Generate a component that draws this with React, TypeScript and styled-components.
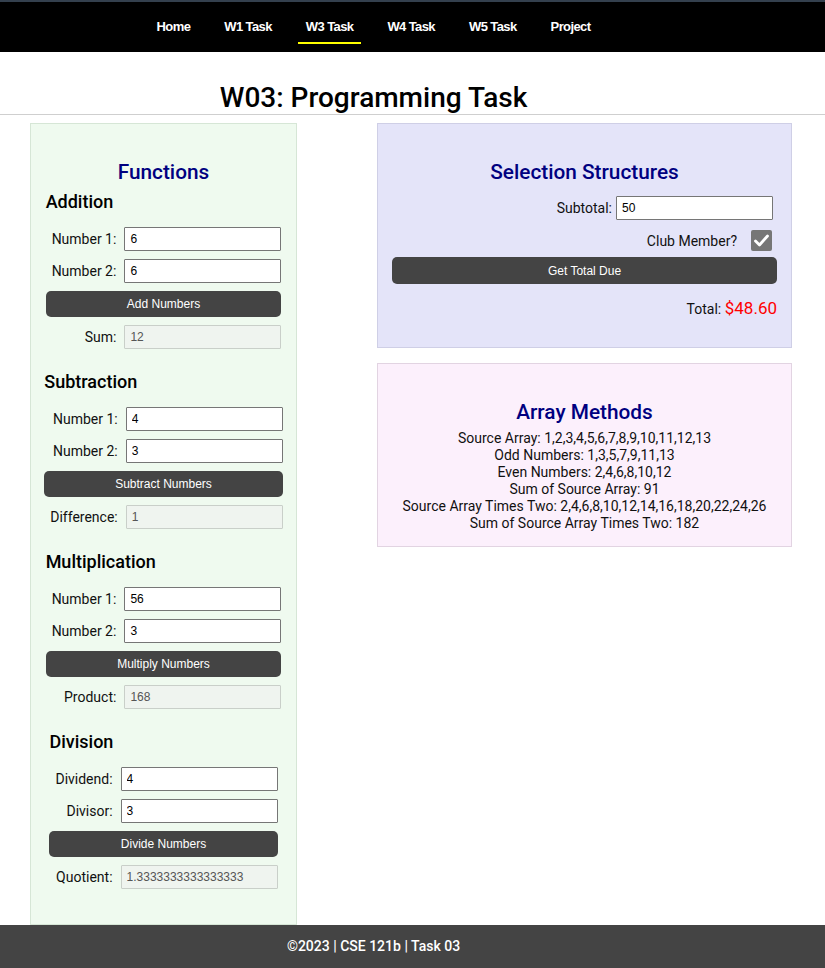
import React from "react";
import styled, { createGlobalStyle } from "styled-components";

const GlobalStyle = createGlobalStyle`
  html, body { margin: 0; padding: 0; background: #fff; }
  body { font-family: Roboto, "Noto Sans", Arial, sans-serif; color: #111; }
  * { box-sizing: border-box; }
`;

const Nav = styled.nav`
  background: #000;
  border-top: 2px solid #34404e;
  height: 52px;
`;

const NavInner = styled.ul`
  width: 747px;
  margin: 0;
  padding: 0;
  list-style: none;
  display: flex;
  justify-content: center;
  gap: 18px;
`;

const NavLink = styled.a<{ $active?: boolean }>`
  display: block;
  padding: 17px 8px 7px;
  line-height: 16px;
  font-family: "Liberation Sans", Arial, sans-serif;
  font-weight: 700;
  font-size: 13px;
  letter-spacing: -0.6px;
  color: #fff;
  text-decoration: none;
  border-bottom: 2px solid ${(p) => (p.$active ? "#ffff00" : "transparent")};
`;

const Header = styled.header`
  border-bottom: 1px solid #cfcfcf;
`;

const Title = styled.h1`
  width: 747px;
  margin: 0;
  padding: 29px 0 0;
  text-align: center;
  font-size: 28px;
  line-height: 33px;
  font-weight: 500;
  color: #000;
`;

const Main = styled.main`
  display: grid;
  grid-template-columns: 267px 415px;
  column-gap: 80px;
  align-items: start;
  padding: 8px 0 0 30px;
`;

const Panel = styled.section<{ $bg: string; $border: string }>`
  background: ${(p) => p.$bg};
  border: 1px solid ${(p) => p.$border};
`;

const FunctionsPanel = styled(Panel)`
  padding: 35px 0 35px;
  display: flex;
  flex-direction: column;
  gap: 22px;
`;

const RightColumn = styled.div`
  display: flex;
  flex-direction: column;
  gap: 15px;
`;

const PanelTitle = styled.h2`
  margin: 0;
  font-size: 20.8px;
  line-height: 26px;
  font-weight: 500;
  color: #000080;
  text-align: center;
`;

const FunctionsTitle = styled(PanelTitle)`
  margin-bottom: -16px;
`;

const Group = styled.div`
  display: grid;
  grid-template-columns: auto 157px;
  column-gap: 8px;
  row-gap: 8px;
  width: fit-content;
  margin: 0 auto;
  align-items: center;
`;

const GroupTitle = styled.h3`
  grid-column: 1 / -1;
  margin: 0 0 7px;
  font-size: 18px;
  line-height: 21px;
  font-weight: 500;
  color: #000;
`;

const Label = styled.label`
  padding-left: 6px;
  text-align: right;
  font-size: 14px;
  color: #111;
`;

const TextInput = styled.input`
  width: 157px;
  height: 24px;
  margin: 0;
  padding: 1px 5px;
  border: 1px solid #767676;
  border-radius: 1px;
  background: #fff;
  font-family: "Liberation Sans", Arial, sans-serif;
  font-size: 12px;
  color: #000;
`;

const Output = styled(TextInput)`
  background: #eff4ef;
  border-color: #c9cfc9;
  color: #555;
`;

const Button = styled.button`
  grid-column: 1 / -1;
  height: 26px;
  margin: 0;
  border: none;
  border-radius: 5px;
  background: #444;
  color: #fff;
  font-family: "Liberation Sans", Arial, sans-serif;
  font-size: 12px;
  cursor: pointer;
`;

const SelectionPanel = styled(Panel)`
  padding: 35px 14px 28px;
`;

const RightRow = styled.div<{ $gap: number; $mt: number }>`
  display: flex;
  justify-content: flex-end;
  align-items: center;
  gap: ${(p) => p.$gap}px;
  margin-top: ${(p) => p.$mt}px;
  padding-right: 4px;
  font-size: 14px;
`;

const Check = styled.span`
  width: 21px;
  height: 21px;
  margin-right: 1px;
  border-radius: 2px;
  background: #767676;
  display: flex;
  align-items: center;
  justify-content: center;
`;

const WideButton = styled(Button)`
  display: block;
  width: 100%;
  height: 27px;
  margin-top: 6px;
`;

const TotalRow = styled.div`
  margin-top: 14px;
  text-align: right;
  font-size: 14px;
  line-height: 20px;
`;

const TotalValue = styled.span`
  color: #ff0000;
  font-size: 17px;
`;

const ArrayPanel = styled(Panel)`
  padding: 35px 14px 14px;
`;

const ArrayLines = styled.div`
  margin-top: 5px;
  text-align: center;
  font-size: 14px;
  line-height: 17px;
`;

const Footer = styled.footer`
  background: #444;
  height: 43px;
`;

const FooterText = styled.p`
  width: 747px;
  margin: 0;
  text-align: center;
  line-height: 43px;
  font-size: 14px;
  font-weight: 500;
  color: #fff;
`;

type Field = { label: string; value: string };
type Op = { title: string; inputs: Field[]; button: string; result: Field };

const ops: Op[] = [
  { title: "Addition", inputs: [{ label: "Number 1:", value: "6" }, { label: "Number 2:", value: "6" }], button: "Add Numbers", result: { label: "Sum:", value: "12" } },
  { title: "Subtraction", inputs: [{ label: "Number 1:", value: "4" }, { label: "Number 2:", value: "3" }], button: "Subtract Numbers", result: { label: "Difference:", value: "1" } },
  { title: "Multiplication", inputs: [{ label: "Number 1:", value: "56" }, { label: "Number 2:", value: "3" }], button: "Multiply Numbers", result: { label: "Product:", value: "168" } },
  { title: "Division", inputs: [{ label: "Dividend:", value: "4" }, { label: "Divisor:", value: "3" }], button: "Divide Numbers", result: { label: "Quotient:", value: "1.3333333333333333" } },
];

const links = ["Home", "W1 Task", "W3 Task", "W4 Task", "W5 Task", "Project"];

const arrayLines = [
  "Source Array: 1,2,3,4,5,6,7,8,9,10,11,12,13",
  "Odd Numbers: 1,3,5,7,9,11,13",
  "Even Numbers: 2,4,6,8,10,12",
  "Sum of Source Array: 91",
  "Source Array Times Two: 2,4,6,8,10,12,14,16,18,20,22,24,26",
  "Sum of Source Array Times Two: 182",
];

export default function App() {
  return (
    <>
      <GlobalStyle />
      <Nav>
        <NavInner>
          {links.map((l) => (
            <li key={l}>
              <NavLink href="#" $active={l === "W3 Task"}>{l}</NavLink>
            </li>
          ))}
        </NavInner>
      </Nav>
      <Header>
        <Title>W03: Programming Task</Title>
      </Header>
      <Main>
        <FunctionsPanel $bg="#effaef" $border="#d6e6d6">
          <FunctionsTitle>Functions</FunctionsTitle>
          {ops.map((op) => (
            <Group key={op.title}>
              <GroupTitle>{op.title}</GroupTitle>
              {op.inputs.map((f) => (
                <React.Fragment key={f.label}>
                  <Label>{f.label}</Label>
                  <TextInput defaultValue={f.value} />
                </React.Fragment>
              ))}
              <Button>{op.button}</Button>
              <Label>{op.result.label}</Label>
              <Output readOnly value={op.result.value} />
            </Group>
          ))}
        </FunctionsPanel>
        <RightColumn>
          <SelectionPanel $bg="#e4e4f9" $border="#cfcfe6">
            <PanelTitle>Selection Structures</PanelTitle>
            <RightRow $gap={4} $mt={11}>
              <span>Subtotal:</span>
              <TextInput defaultValue="50" />
            </RightRow>
            <RightRow $gap={14} $mt={10}>
              <span>Club Member?</span>
              <Check>
                <svg width="15" height="13" viewBox="0 0 15 13">
                  <path d="M1.5 7 L5.5 11 L13.5 2" fill="none" stroke="#fff" strokeWidth="2.8" strokeLinecap="round" strokeLinejoin="round" />
                </svg>
              </Check>
            </RightRow>
            <WideButton>Get Total Due</WideButton>
            <TotalRow>
              Total: <TotalValue>$48.60</TotalValue>
            </TotalRow>
          </SelectionPanel>
          <ArrayPanel $bg="#fcf0fc" $border="#e2d4e2">
            <PanelTitle>Array Methods</PanelTitle>
            <ArrayLines>
              {arrayLines.map((l) => (
                <div key={l}>{l}</div>
              ))}
            </ArrayLines>
          </ArrayPanel>
        </RightColumn>
      </Main>
      <Footer>
        <FooterText>©2023 | CSE 121b | Task 03</FooterText>
      </Footer>
    </>
  );
}
